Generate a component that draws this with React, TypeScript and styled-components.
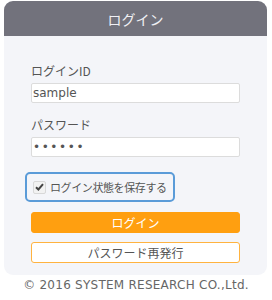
import React from "react";
import styled, { createGlobalStyle } from "styled-components";

const Global = createGlobalStyle`
  body {
    margin: 0;
    background: #ffffff;
    font-family: "Noto Sans CJK JP", "Noto Sans", sans-serif;
  }
`;

const Page = styled.div`
  width: 272px;
  padding-top: 1px;
`;

const Card = styled.div`
  margin: 0 5px 0 4px;
  background: #f4f5f9;
  border-radius: 9px;
  overflow: hidden;
`;

const Header = styled.div`
  height: 35px;
  background: #72727c;
  color: #f0f0f4;
  font-size: 14px;
  display: flex;
  align-items: center;
  justify-content: center;
`;

const Body = styled.div`
  padding: 25px 27px 12px;
  display: flex;
  flex-direction: column;
`;

const Label = styled.div`
  font-size: 12px;
  line-height: 20px;
  color: #555;
  margin-bottom: 2px;
`;

const Input = styled.input<{ $secret?: boolean }>`
  box-sizing: border-box;
  width: 100%;
  height: 20px;
  border: 1px solid #dcdcdc;
  border-radius: 2px;
  background: #fff;
  padding: 0 1px;
  font-family: "DejaVu Sans", sans-serif;
  font-size: 12px;
  letter-spacing: ${(p) => (p.$secret ? "1.6px" : "0")};
  color: #555;
  margin: 0 0 12px;
  outline: none;
`;

const Remember = styled.label`
  display: flex;
  align-items: center;
  gap: 4px;
  box-sizing: border-box;
  height: 30px;
  width: 150px;
  margin: 3px 0 10px -6px;
  padding-left: 6px;
  border: 2px solid #5a9bd8;
  border-radius: 5px;
  font-size: 11px;
  letter-spacing: -0.4px;
  white-space: nowrap;
  color: #555;
`;

const Box = styled.span`
  width: 11px;
  height: 11px;
  border: 1px solid #d8d8d8;
  background: #f2f2f2;
  border-radius: 2px;
  display: flex;
  align-items: center;
  justify-content: center;
`;

const Button = styled.button<{ $primary?: boolean }>`
  box-sizing: border-box;
  width: 100%;
  height: 21px;
  border-radius: 3px;
  border: 1px solid ${(p) => (p.$primary ? "#ff9f10" : "#ffb340")};
  background: ${(p) => (p.$primary ? "#ff9f10" : "#ffffff")};
  color: ${(p) => (p.$primary ? "#ffffff" : "#555555")};
  font-family: "Noto Sans CJK JP", sans-serif;
  font-size: 12px;
  padding: 0;
  display: flex;
  align-items: center;
  justify-content: center;
  margin-bottom: 9px;
  &:last-child {
    margin-bottom: 0;
  }
`;

const Footer = styled.div`
  text-align: center;
  font-family: "DejaVu Sans", sans-serif;
  font-size: 12px;
  letter-spacing: 0.25px;
  color: #666;
  margin-top: 3px;
`;

export default function App() {
  return (
    <Page>
      <Global />
      <Card>
        <Header>ログイン</Header>
        <Body>
          <Label>ログインID</Label>
          <Input defaultValue="sample" />
          <Label>パスワード</Label>
          <Input $secret type="password" defaultValue="abcdef" />
          <Remember>
            <Box>
              <svg width="9" height="8" viewBox="0 0 9 8">
                <path d="M1 4.2 L3.4 6.5 L8 1.2" stroke="#444" strokeWidth="2" fill="none" />
              </svg>
            </Box>
            ログイン状態を保存する
          </Remember>
          <Button $primary>ログイン</Button>
          <Button>パスワード再発行</Button>
        </Body>
      </Card>
      <Footer>© 2016 SYSTEM RESEARCH CO.,Ltd.</Footer>
    </Page>
  );
}
